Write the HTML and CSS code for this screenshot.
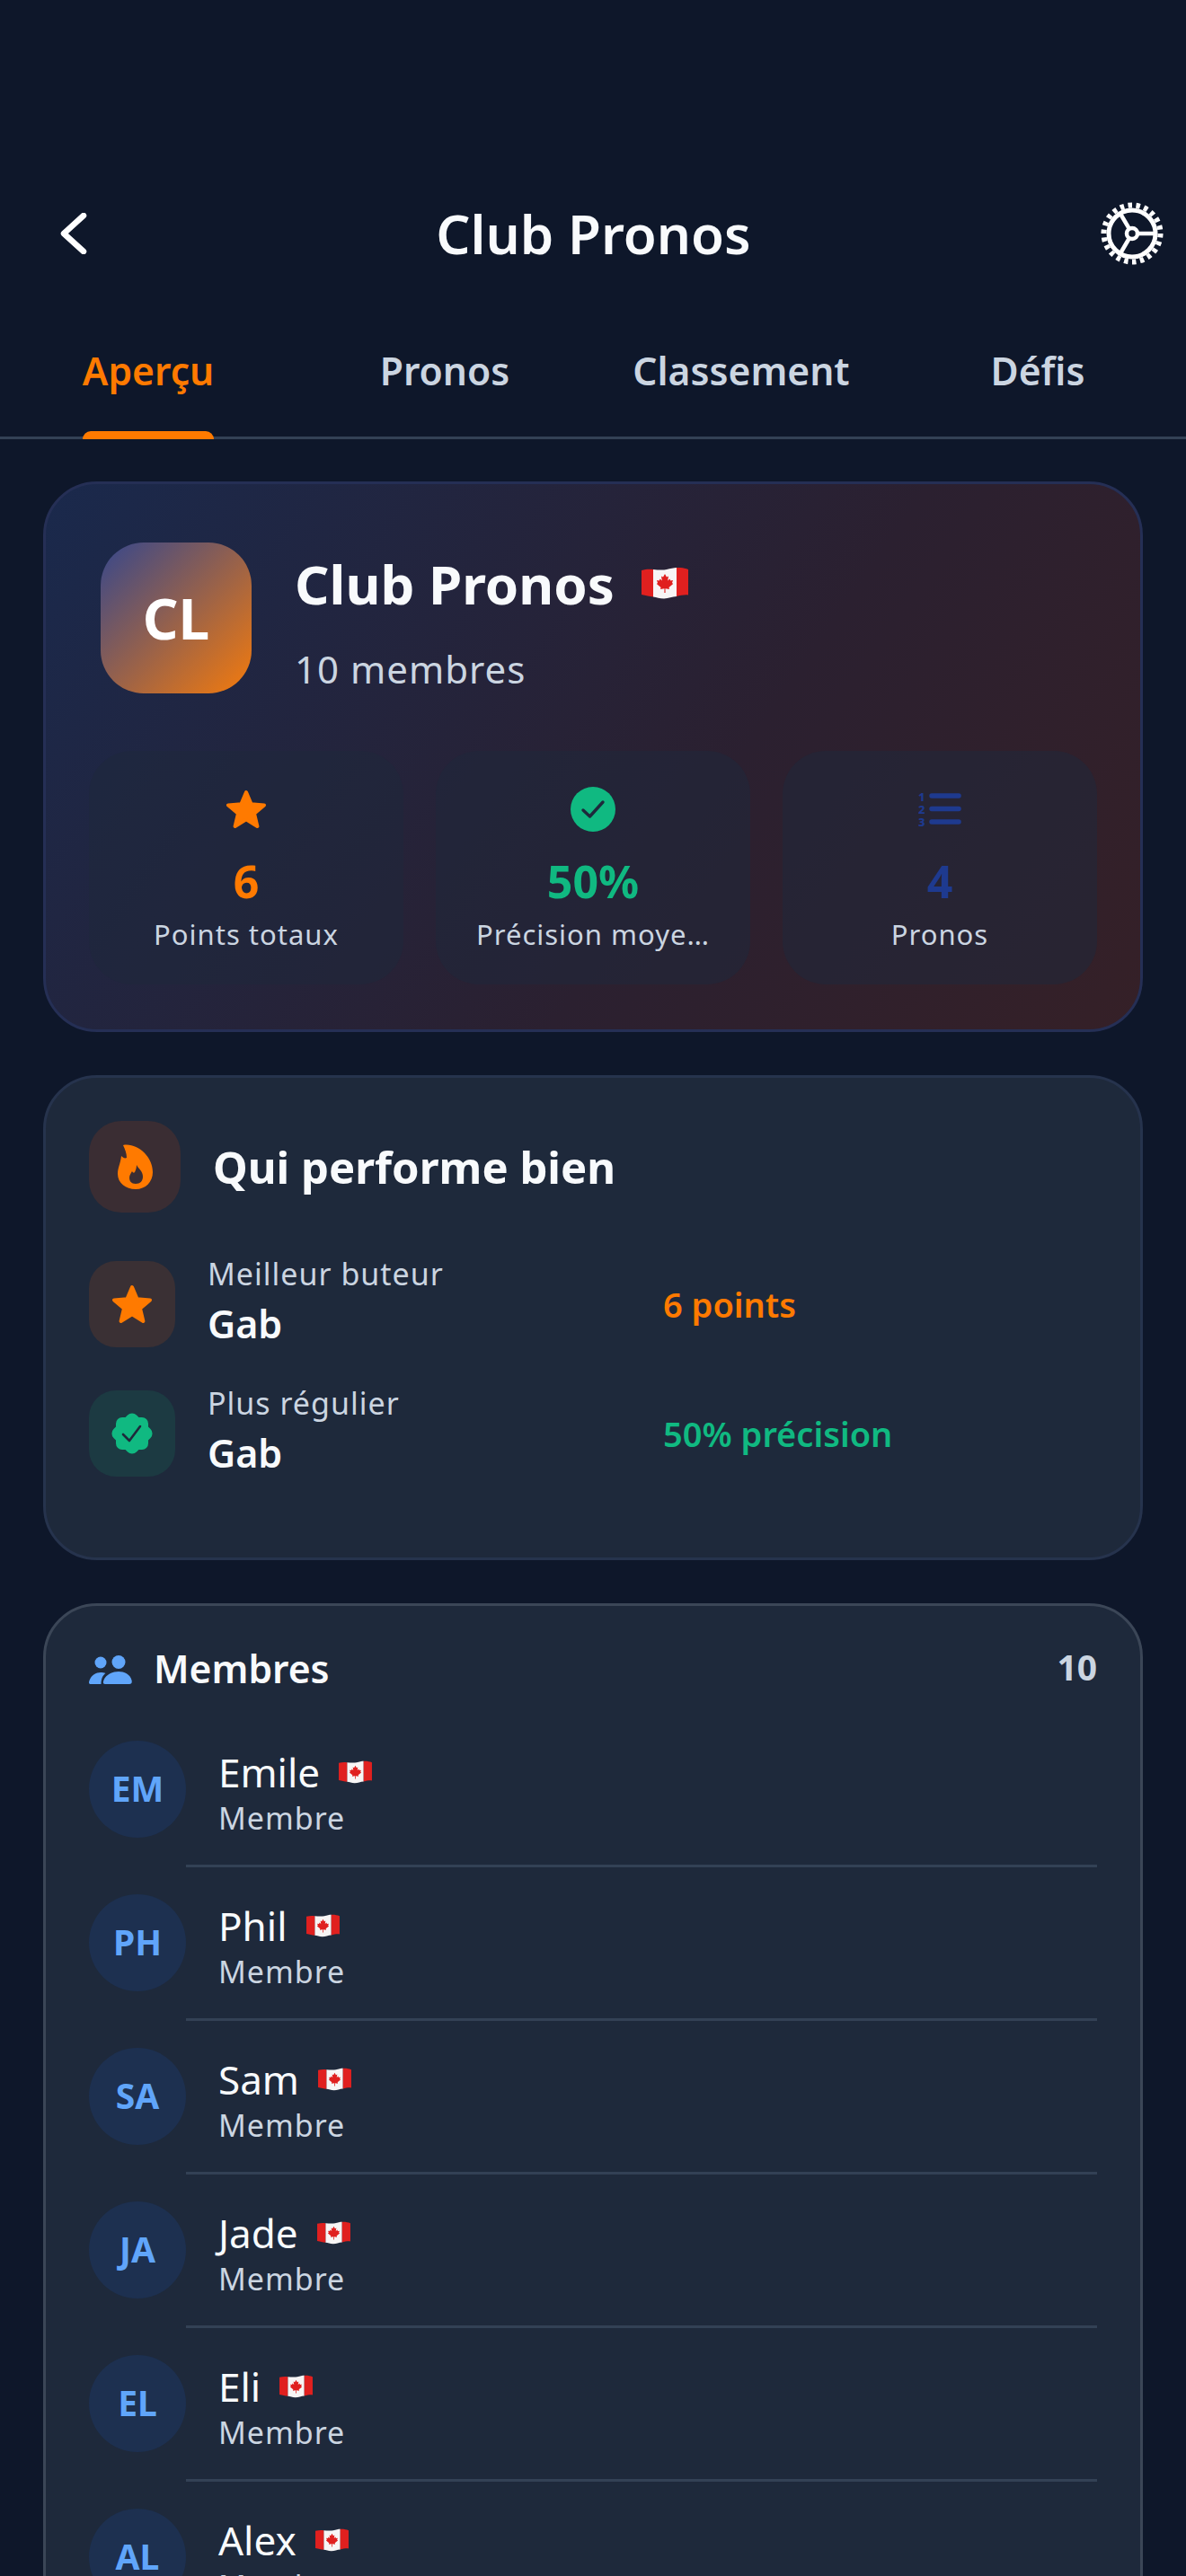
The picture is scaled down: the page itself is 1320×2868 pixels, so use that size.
FILE: index.html
```html
<!DOCTYPE html>
<html lang="fr">
  <head>
    <meta charset="UTF-8" />
    <meta name="viewport" content="width=device-width, initial-scale=1.0" />
    <title>Club Pronos</title>
    <link rel="stylesheet" href="styles.css">
  </head>

  <body>
    <svg class="sprites" aria-hidden="true">
      <symbol id="flag" viewBox="0 0 52 38">
        <path fill="#f7f5f5" d="M13 3C18 3.5 24 4 28 3C32 2 36 1 39 1L39 33C34 33 30 35.5 25 35.5C20 35.5 17 34 13 33.5Z" />
        <path fill="#e0201f" d="M0 4C5 2.5 9 2.5 13 3L13 33.5C9 33 5 32 0 31Z" />
        <path fill="#e0201f" d="M39 1C44 .7 48 1.5 52 3L52 31.5C48 31 43 32 39 33Z" />
        <polygon fill="#e0201f" points="26,8 28,11.5 30,10.5 29.2,15.5 31.5,13.5 32.3,15.5 35,15 34,18 35.2,19 30.5,23 31,25 26.5,24.3 26.6,29 25.4,29 25.5,24.3 21,25 21.5,23 16.8,19 18,18 17,15 19.7,15.5 20.5,13.5 22.8,15.5 22,10.5 24,11.5" />
      </symbol>
      <symbol id="star" viewBox="0 0 46 44">
        <polygon fill="#ff7a00" stroke="#ff7a00" stroke-width="4" stroke-linejoin="round" points="23,3 28.6,16.2 43,17.4 32,26.8 35.4,41 23,33.4 10.6,41 14,26.8 3,17.4 17.4,16.2" />
      </symbol>
    </svg>

    <header class="topbar">
      <svg class="back-icon" viewBox="0 0 30 46" fill="none">
        <polyline points="26,3 4,23 26,43" stroke="#fff" stroke-width="6.5" stroke-linecap="round" stroke-linejoin="round" />
      </svg>
      <h1 class="page-title">Club Pronos</h1>
      <svg class="gear-icon" viewBox="0 0 72 72" fill="none" stroke="#fff">
        <circle cx="36" cy="36" r="31.5" stroke-width="6" pathLength="44" stroke-dasharray="1 1" />
        <circle cx="36" cy="36" r="26" stroke-width="5" />
        <circle cx="36" cy="36" r="6" stroke-width="4.5" />
        <path stroke-width="4.5" d="M42 36H62M33 31L23 14M33 41L23 58" />
      </svg>
    </header>

    <nav class="tabs">
      <div class="tab"><span class="tab-label active">Aperçu</span></div>
      <div class="tab"><span class="tab-label">Pronos</span></div>
      <div class="tab"><span class="tab-label">Classement</span></div>
      <div class="tab"><span class="tab-label">Défis</span></div>
    </nav>

    <main class="content">
      <section class="hero">
        <div class="hero-top">
          <div class="club-logo">CL</div>
          <div class="club-text">
            <div class="club-name">Club Pronos <svg class="flag-big"><use href="#flag" /></svg></div>
            <div class="club-count">10 membres</div>
          </div>
        </div>
        <div class="stats">
          <div class="stat">
            <div class="stat-icon"><svg class="icon-star-sm"><use href="#star" /></svg></div>
            <div class="stat-value orange">6</div>
            <div class="stat-label">Points totaux</div>
          </div>
          <div class="stat">
            <div class="stat-icon">
              <svg class="icon-check" viewBox="0 0 50 50">
                <circle cx="25" cy="25" r="25" fill="#10b981" />
                <polyline points="14,26 21.5,33 36,17" fill="none" stroke="#1e293b" stroke-width="3.4" stroke-linecap="round" stroke-linejoin="round" />
              </svg>
            </div>
            <div class="stat-value green">50%</div>
            <div class="stat-label">Précision moye…</div>
          </div>
          <div class="stat">
            <div class="stat-icon">
              <svg class="icon-list" viewBox="0 -5 48 50">
                <path d="M15 5H45M15 19.500H45M15 34H45" stroke="#1e3a8f" stroke-width="5.500" stroke-linecap="round" />
                <text x="0" y="11" class="list-num">1</text>
                <text x="0" y="25" class="list-num">2</text>
                <text x="0" y="39" class="list-num">3</text>
              </svg>
            </div>
            <div class="stat-value blue">4</div>
            <div class="stat-label">Pronos</div>
          </div>
        </div>
      </section>

      <section class="card perf">
        <div class="perf-head">
          <div class="perf-head-icon">
            <svg class="icon-flame" viewBox="0 0 39 50">
              <path fill="#ff7a00" d="M6 1C21 -2 39 13 39 31C39 42 31 50 20 50C9 50 0 43 0 33C0 26 3 22 4 13C6 15 8 16 10 15C10 10 8 5 6 1Z" />
              <path fill="#3a2d33" d="M21 23C23 27 28 30 28 36C28 41 25 44 20 44C15 44 13 41 13 37C13 34 15 32 16 30C17 32 18 32 19 31C20 29 21 26 21 23Z" />
            </svg>
          </div>
          <h2 class="perf-title">Qui performe bien</h2>
        </div>
        <div class="perf-list">
          <div class="perf-row">
            <div class="perf-icon perf-icon-orange"><svg class="icon-star-md"><use href="#star" /></svg></div>
            <div class="perf-body">
              <div class="perf-who">
                <div class="perf-label">Meilleur buteur</div>
                <div class="perf-name">Gab</div>
              </div>
              <div class="perf-value orange">6 points</div>
            </div>
          </div>
          <div class="perf-row">
            <div class="perf-icon perf-icon-green">
              <svg class="icon-badge" viewBox="0 0 46 46">
                <rect x="5" y="5" width="36" height="36" rx="7" fill="#10b981" />
                <rect x="5" y="5" width="36" height="36" rx="7" fill="#10b981" transform="rotate(45 23 23)" />
                <polyline points="13,24 20,31 32,15" fill="none" stroke="#1e293b" stroke-width="2.600" stroke-linecap="round" stroke-linejoin="round" />
              </svg>
            </div>
            <div class="perf-body">
              <div class="perf-who">
                <div class="perf-label">Plus régulier</div>
                <div class="perf-name">Gab</div>
              </div>
              <div class="perf-value green">50% précision</div>
            </div>
          </div>
        </div>
      </section>

      <section class="card members">
        <div class="members-head">
          <svg class="icon-people" viewBox="0 0 48 32" fill="#60a5fa">
            <circle cx="33" cy="7.500" r="7.500" />
            <circle cx="13" cy="8" r="6.500" />
            <path d="M18 32C15.500 32 15.500 30 16.500 27.500C19 21 27 18 33 18C39 18 46 21 47.500 27.500C48.200 30 47.500 32 45 32Z" />
            <path d="M2 32C0 32 -.5 30.500 .5 28C2.500 22 8 19 13 19C15 19 17 19.300 18.500 20C15.500 22 13.500 26 13.500 32Z" />
          </svg>
          <h2 class="members-title">Membres</h2>
          <span class="members-count">10</span>
        </div>

        <div class="member">
          <div class="member-avatar">EM</div>
          <div class="member-body">
            <div class="member-name">Emile <svg class="flag-small"><use href="#flag" /></svg></div>
            <div class="member-role">Membre</div>
          </div>
        </div>
        <div class="member">
          <div class="member-avatar">PH</div>
          <div class="member-body">
            <div class="member-name">Phil <svg class="flag-small"><use href="#flag" /></svg></div>
            <div class="member-role">Membre</div>
          </div>
        </div>
        <div class="member">
          <div class="member-avatar">SA</div>
          <div class="member-body">
            <div class="member-name">Sam <svg class="flag-small"><use href="#flag" /></svg></div>
            <div class="member-role">Membre</div>
          </div>
        </div>
        <div class="member">
          <div class="member-avatar">JA</div>
          <div class="member-body">
            <div class="member-name">Jade <svg class="flag-small"><use href="#flag" /></svg></div>
            <div class="member-role">Membre</div>
          </div>
        </div>
        <div class="member">
          <div class="member-avatar">EL</div>
          <div class="member-body">
            <div class="member-name">Eli <svg class="flag-small"><use href="#flag" /></svg></div>
            <div class="member-role">Membre</div>
          </div>
        </div>
        <div class="member">
          <div class="member-avatar">AL</div>
          <div class="member-body">
            <div class="member-name">Alex <svg class="flag-small"><use href="#flag" /></svg></div>
            <div class="member-role">Membre</div>
          </div>
        </div>
      </section>
    </main>
  </body>
</html>
```

FILE: styles.css
```css
html,
body {
  margin: 0;
  padding: 0;
  height: 2868px;
  overflow: hidden;
}

body {
  font-family: "Noto Sans", sans-serif;
  background-color: #0e172a;
  color: #f8fafc;
}

h1,
h2 {
  margin: 0;
}

.sprites {
  width: 0;
  height: 0;
  display: block;
}

.orange {
  color: #ff7a00;
}

.green {
  color: #10b981;
}

.blue {
  color: #1e3a8f;
}

/* top bar */
.topbar {
  display: flex;
  align-items: center;
  justify-content: space-between;
  padding: 210px 24px 0 67px;
  height: 100px;
}

.back-icon {
  width: 30px;
  height: 46px;
}

.page-title {
  font-size: 60px;
  line-height: 80px;
  font-weight: 600;
}

.gear-icon {
  width: 72px;
  height: 72px;
}

/* tabs */
.tabs {
  display: flex;
  margin-top: 62px;
  height: 114px;
  border-bottom: 3px solid #334155;
}

.tab {
  flex: 1;
  text-align: center;
  padding-top: 12px;
}

.tab-label {
  display: inline-block;
  position: relative;
  font-size: 42.6px;
  line-height: 57px;
  font-weight: 600;
  color: #cbd5e1;
}

.tab-label.active {
  color: #ff7a00;
}

.tab-label.active::after {
  content: "";
  position: absolute;
  left: 0;
  right: 0;
  top: 96px;
  height: 9px;
  border-radius: 9px 9px 0 0;
  background-color: #ff7a00;
}

/* page content */
.content {
  padding: 47px 48px 0;
  display: flex;
  flex-direction: column;
  gap: 48px;
}

.hero {
  border: 3px solid #252f55;
  border-radius: 60px;
  background: linear-gradient(125deg, #1a294c 0%, #2b2030 60%, #352027 100%);
  padding: 65px 48px 50px;
}

.hero-top {
  display: flex;
  height: 168px;
  margin-left: 13px;
  gap: 48px;
}

.club-logo {
  width: 168px;
  height: 168px;
  border-radius: 48px;
  background: linear-gradient(135deg, #36478c 0%, #f57b0c 100%);
  display: flex;
  align-items: center;
  justify-content: center;
  font-size: 62px;
  font-weight: 700;
  color: #fff;
}

.club-text {
  padding-top: 9px;
}

.club-name {
  display: flex;
  align-items: center;
  gap: 30px;
  font-size: 60px;
  line-height: 75px;
  font-weight: 700;
}

.flag-big {
  width: 52px;
  height: 38px;
  margin-top: -2px;
}

.club-count {
  margin-top: 27px;
  font-size: 42px;
  line-height: 60px;
  letter-spacing: 1px;
  color: #cbd5e1;
}

.stats {
  display: flex;
  gap: 36px;
  margin-top: 64px;
}

.stat {
  flex: 1;
  min-width: 0;
  height: 260px;
  box-sizing: border-box;
  padding: 35px 36px 0;
  border-radius: 48px;
  background-color: rgba(30, 41, 59, 0.52);
  text-align: center;
}

.stat-icon {
  height: 60px;
  display: flex;
  align-items: center;
  justify-content: center;
}

.icon-star-sm {
  width: 46px;
  height: 44px;
}

.icon-check {
  width: 50px;
  height: 50px;
}

.icon-list {
  width: 48px;
  height: 50px;
}

.list-num {
  font-size: 13px;
  font-weight: 800;
  fill: #1e3a8f;
}

.stat-value {
  margin-top: 20px;
  font-size: 50px;
  line-height: 60px;
  font-weight: 700;
}

.stat-label {
  margin-top: 7px;
  font-size: 31px;
  line-height: 45px;
  letter-spacing: 1px;
  color: #cbd5e1;
  white-space: nowrap;
}

/* cards */
.card {
  border: 3px solid #26334d;
  border-radius: 60px;
  background-color: #1e293b;
}

.perf {
  padding: 48px 48px 90px;
}

.perf-head {
  display: flex;
  align-items: center;
  gap: 36px;
}

.perf-head-icon {
  width: 102px;
  height: 102px;
  border-radius: 36px;
  background-color: #3a2d33;
  display: flex;
  align-items: center;
  justify-content: center;
}

.icon-flame {
  width: 39px;
  height: 50px;
}

.perf-title {
  font-size: 49px;
  line-height: 66px;
  font-weight: 700;
}

.perf-list {
  margin-top: 54px;
  display: flex;
  flex-direction: column;
  gap: 48px;
}

.perf-row {
  display: flex;
  gap: 36px;
  height: 96px;
}

.perf-icon {
  width: 96px;
  height: 96px;
  border-radius: 30px;
  display: flex;
  align-items: center;
  justify-content: center;
}

.perf-icon-orange {
  background-color: #3a3034;
}

.perf-icon-green {
  background-color: #1c3a42;
}

.icon-star-md,
.icon-badge {
  width: 46px;
  height: 46px;
}

.perf-body {
  flex: 1;
  display: flex;
  align-items: center;
  gap: 24px;
}

.perf-who {
  flex: 1;
  margin-top: -7px;
}

.perf-label {
  font-size: 34px;
  line-height: 45px;
  letter-spacing: 1px;
  color: #cbd5e1;
}

.perf-name {
  margin-top: 6px;
  font-size: 43px;
  line-height: 54px;
  font-weight: 600;
}

.perf-value {
  flex: 1;
  font-size: 38px;
  line-height: 54px;
  font-weight: 600;
}

.members {
  border-color: #3b4657;
  padding: 0 48px;
}

.members-head {
  display: flex;
  align-items: center;
  gap: 24px;
  padding-top: 39px;
  height: 60px;
  padding-bottom: 21px;
}

.icon-people {
  width: 48px;
  height: 32px;
  margin-top: 4px;
}

.members-title {
  flex: 1;
  font-size: 42.6px;
  line-height: 60px;
  font-weight: 600;
}

.members-count {
  font-size: 39px;
  font-weight: 700;
  color: #cbd5e1;
  margin-top: -3px;
}

.member {
  display: flex;
  height: 171px;
}

.member-avatar {
  flex-shrink: 0;
  width: 108px;
  height: 108px;
  margin-top: 30px;
  box-sizing: border-box;
  padding-bottom: 3px;
  border-radius: 50%;
  background-color: #1d3050;
  display: flex;
  align-items: center;
  justify-content: center;
  font-size: 39px;
  font-weight: 700;
  color: #60a5fa;
}

.member-body {
  flex: 1;
  box-sizing: border-box;
  padding: 38px 0 0 36px;
  border-bottom: 3px solid #334155;
}

.member-name {
  display: flex;
  align-items: center;
  gap: 21px;
  font-size: 44px;
  line-height: 54px;
}

.flag-small {
  width: 37px;
  height: 27px;
}

.member-role {
  margin-top: 2px;
  font-size: 34px;
  line-height: 45px;
  letter-spacing: 1px;
  color: #cbd5e1;
}
```
